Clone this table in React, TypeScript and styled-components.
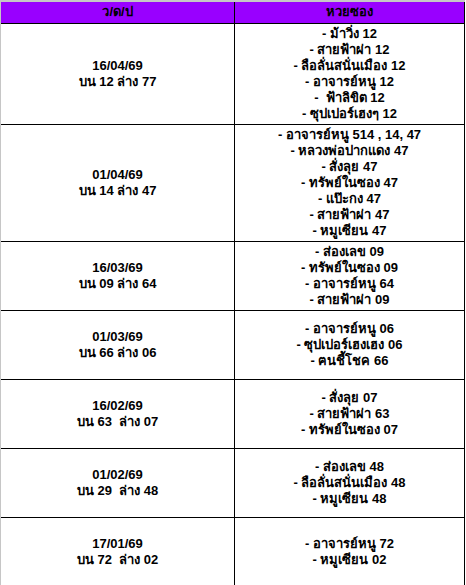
import React from "react";
import styled, { createGlobalStyle } from "styled-components";

const Global = createGlobalStyle`
  html, body { margin: 0; padding: 0; background: #ffffff; }
  body { font-family: "Liberation Sans", Arial, "Noto Sans", "DejaVu Sans", sans-serif; }
`;

const Frame = styled.div`
  width: 465px;
  min-height: 585px;
  box-sizing: border-box;
  border-left: 1px solid #c6c6c6;
  border-top: 2px solid #c6c6c6;
  overflow: hidden;
`;

const Table = styled.div`
  width: 464px;
  display: flex;
  flex-direction: column;
`;

const Row = styled.div<{ $min?: number }>`
  display: grid;
  grid-template-columns: 234px 230px;
  border-bottom: 1px solid #000;
  min-height: ${(p) => p.$min ?? 68}px;
`;

const HeaderRow = styled(Row)`
  background: #9900ff;
`;

const Cell = styled.div`
  box-sizing: border-box;
  border-right: 1px solid #000;
  display: flex;
  flex-direction: column;
  align-items: center;
  justify-content: center;
  padding: 2px 0;
  font-size: 13px;
  font-weight: bold;
  line-height: 16px;
  color: #000;
  text-align: center;
`;

const HeadCell = styled(Cell)`
  padding: 2px 0 3px;
`;

const Line = styled.div`
  white-space: pre;
`;

type Entry = { date: string; result: string; items: string[] };

const data: Entry[] = [
  {
    date: "16/04/69",
    result: "บน 12 ล่าง 77",
    items: [
      "- ม้าวิ่ง 12",
      "- สายฟ้าผ่า 12",
      "- ลือลั่นสนั่นเมือง 12",
      "- อาจารย์หนู 12",
      "-  ฟ้าลิขิต 12",
      "- ซุปเปอร์เฮงๆ 12",
    ],
  },
  {
    date: "01/04/69",
    result: "บน 14 ล่าง 47",
    items: [
      "- อาจารย์หนู 514 , 14, 47",
      "- หลวงพ่อปากแดง 47",
      "- สั่งลุย 47",
      "- ทรัพย์ในซอง 47",
      "- แป๊ะกง 47",
      "- สายฟ้าผ่า 47",
      "- หมูเซียน 47",
    ],
  },
  {
    date: "16/03/69",
    result: "บน 09 ล่าง 64",
    items: ["- ส่องเลข 09", "- ทรัพย์ในซอง 09", "- อาจารย์หนู 64", "- สายฟ้าผ่า 09"],
  },
  {
    date: "01/03/69",
    result: "บน 66 ล่าง 06",
    items: ["- อาจารย์หนู 06", "- ซุปเปอร์เฮงเฮง 06", "- ฅนชี้โชค 66"],
  },
  {
    date: "16/02/69",
    result: "บน 63  ล่าง 07",
    items: ["- สั่งลุย 07", "- สายฟ้าผ่า 63", "- ทรัพย์ในซอง 07"],
  },
  {
    date: "01/02/69",
    result: "บน 29  ล่าง 48",
    items: ["- ส่องเลข 48", "- ลือลั่นสนั่นเมือง 48", "- หมูเซียน 48"],
  },
  {
    date: "17/01/69",
    result: "บน 72  ล่าง 02",
    items: ["- อาจารย์หนู 72", "- หมูเซียน 02"],
  },
];

export default function App() {
  return (
    <>
      <Global />
      <Frame>
        <Table>
          <HeaderRow $min={21}>
            <HeadCell>ว/ด/ป</HeadCell>
            <HeadCell>หวยซอง</HeadCell>
          </HeaderRow>
          {data.map((e) => (
            <Row key={e.date}>
              <Cell>
                <Line>{e.date}</Line>
                <Line>{e.result}</Line>
              </Cell>
              <Cell>
                {e.items.map((it) => (
                  <Line key={it}>{it}</Line>
                ))}
              </Cell>
            </Row>
          ))}
        </Table>
      </Frame>
    </>
  );
}
